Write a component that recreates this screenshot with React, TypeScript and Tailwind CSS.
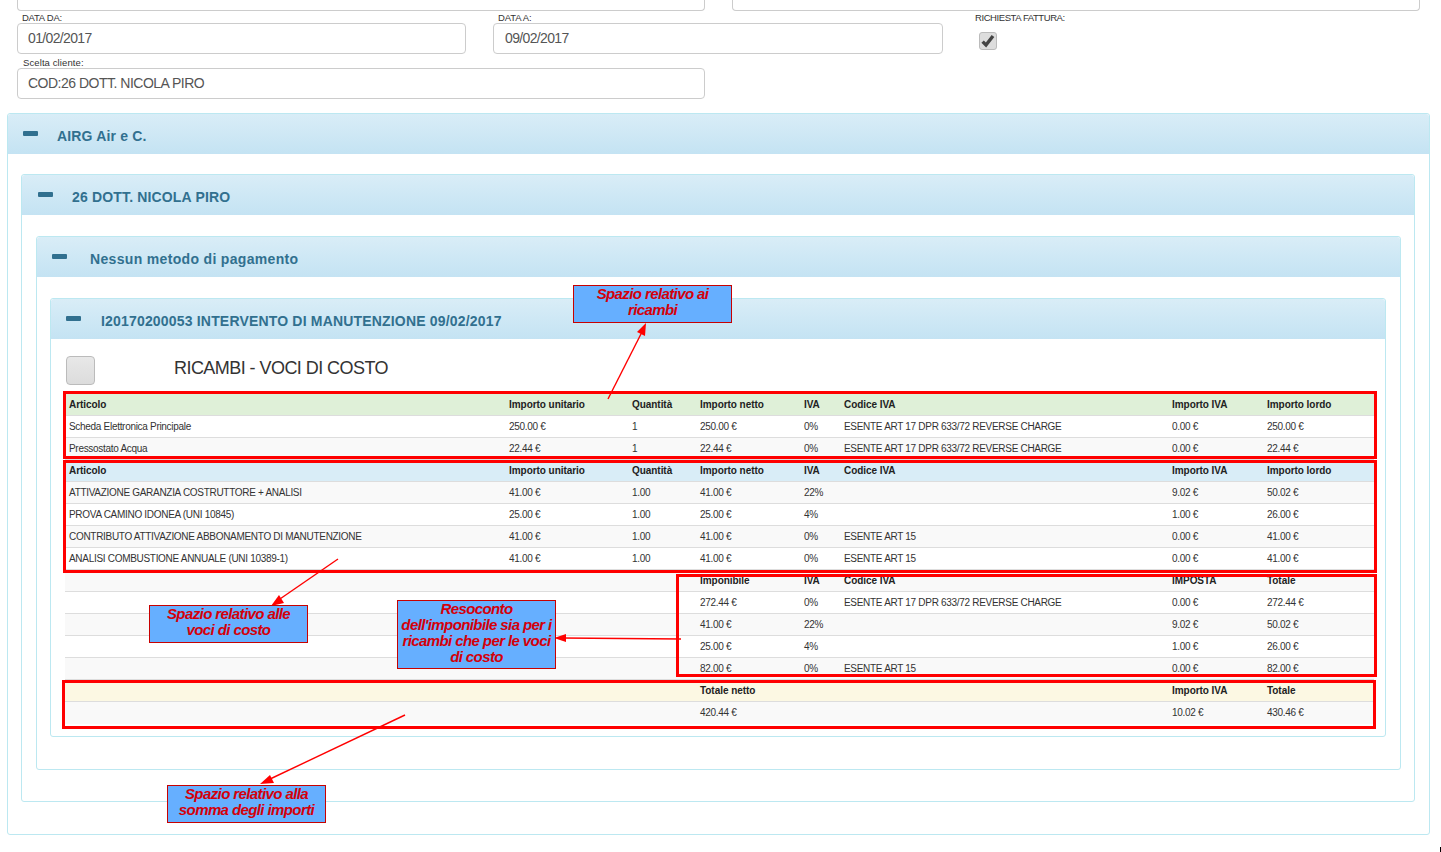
import React from "react";

const F = "[font-family:'Liberation_Sans',Arial,sans-serif]";

function Panel({ title, iconCls, titleCls, bodyCls, children }: { title: string; iconCls: string; titleCls: string; bodyCls: string; children: React.ReactNode }) {
  return (
    <div className="rounded-[3px] border border-[#bce8f1] bg-white">
      <div className="flex h-[40px] items-center rounded-t-[3px] bg-gradient-to-b from-[#d9edf7] to-[#c4e3f3]">
        <span className={`mb-[2px] h-[5px] w-[15px] rounded-[1px] bg-[#31708f] ${iconCls}`} />
        <span className={`pt-[4px] text-[14px] font-bold text-[#31708f] ${titleCls}`}>{title}</span>
      </div>
      <div className={bodyCls}>{children}</div>
    </div>
  );
}

const grid = "grid grid-cols-[440px_123px_68px_104px_40px_328px_95px_111px]";

function Row({ cells, head, bg, last }: { cells: string[]; head?: boolean; bg: string; last?: boolean }) {
  return (
    <div className={`${grid} h-[22px] items-center text-[10px] ${last ? "pb-[1px]" : "border-b border-[#ddd]"} ${bg} ${head ? "font-bold tracking-[-0.05px] text-[#222]" : "tracking-[-0.3px] text-[#333]"}`}>
      {cells.map((c, i) => (
        <div key={i} className="overflow-hidden whitespace-nowrap pl-[4px]">{c}</div>
      ))}
    </div>
  );
}

function Note({ cls, lines }: { cls: string; lines: string[] }) {
  return (
    <div className={`absolute flex w-[159px] flex-col items-center justify-center border border-[#c80000] bg-[#66afff] pb-[4px] text-[15px] font-bold italic leading-[16px] tracking-[-0.6px] text-[#d4000a] ${cls}`}>
      {lines.map((l) => (
        <div key={l} className="whitespace-nowrap">{l}</div>
      ))}
    </div>
  );
}

const ART = "ESENTE ART 17 DPR 633/72 REVERSE CHARGE";
const head = ["Articolo", "Importo unitario", "Quantità", "Importo netto", "IVA", "Codice IVA", "Importo IVA", "Importo lordo"];

export default function App() {
  return (
    <div className={`relative h-[852px] w-[1441px] overflow-hidden bg-white ${F}`}>
      <div className="flex h-[11px] gap-[27px] pl-[17px]">
        <div className="w-[688px] rounded-b-[4px] border border-t-0 border-[#ccc]" />
        <div className="w-[688px] rounded-b-[4px] border border-t-0 border-[#ccc]" />
      </div>

      <div className="flex pl-[17px] pt-[2px]">
        <div className="w-[449px]">
          <div className="h-[10px] pl-[5px] text-[9.5px] leading-[10px] tracking-[-0.25px] text-[#333]">DATA DA:</div>
          <div className="flex h-[31px] items-center rounded-[4px] border border-[#ccc] pl-[10px] text-[14px] tracking-[-0.65px] text-[#555]">01/02/2017</div>
        </div>
        <div className="ml-[27px] w-[450px]">
          <div className="h-[10px] pl-[5px] text-[9.5px] leading-[10px] tracking-[-0.15px] text-[#333]">DATA A:</div>
          <div className="flex h-[31px] items-center rounded-[4px] border border-[#ccc] pl-[11px] text-[14px] tracking-[-0.65px] text-[#555]">09/02/2017</div>
        </div>
        <div className="ml-[32px]">
          <div className="h-[10px] text-[9.5px] leading-[10px] tracking-[-0.42px] text-[#333]">RICHIESTA FATTURA:</div>
          <div className="ml-[4px] mt-[9px] flex h-[18px] w-[18px] items-center justify-center rounded-[3px] border border-[#bbb] bg-[#ddd]">
            <svg width="14" height="14" viewBox="0 0 14 14" fill="none">
              <path d="M1.6 7.6 L5 11 L12 2" stroke="#444" strokeWidth="3.4" />
            </svg>
          </div>
        </div>
      </div>

      <div className="pl-[17px] pt-[4px]">
        <div className="h-[10px] pl-[6px] text-[9.5px] leading-[10px] tracking-[0.1px] text-[#333]">Scelta cliente:</div>
        <div className="flex h-[31px] w-[688px] items-center rounded-[4px] border border-[#ccc] pl-[10px] text-[14px] tracking-[-0.5px] text-[#555]">COD:26 DOTT. NICOLA PIRO</div>
      </div>

      <div className="ml-[7px] mt-[14px] w-[1423px]">
        <Panel title="AIRG Air e C." iconCls="ml-[15px]" titleCls="ml-[19px] tracking-[0.16px]" bodyCls="pl-[13px] pr-[14px] pt-[20px] pb-[32px]">
          <Panel title="26 DOTT. NICOLA PIRO" iconCls="ml-[16px]" titleCls="ml-[19px] tracking-[0.16px]" bodyCls="pl-[14px] pr-[13px] pt-[21px] pb-[31px]">
            <Panel title="Nessun metodo di pagamento" iconCls="ml-[15px]" titleCls="ml-[23px] tracking-[0.33px]" bodyCls="pl-[13px] pr-[14px] pt-[21px] pb-[32px]">
              <Panel title="I20170200053 INTERVENTO DI MANUTENZIONE 09/02/2017" iconCls="ml-[15px]" titleCls="ml-[20px] tracking-[0.18px]" bodyCls="pl-[14px] pr-[11px] pt-[17px] pb-[12px]">
                <div className="flex h-[38px] items-start pl-[1px]">
                  <div className="h-[29px] w-[29px] rounded-[4px] border border-[#bbb] bg-gradient-to-b from-[#e8e8e8] to-[#dcdcdc]" />
                  <div className="ml-[79px] mt-[2px] text-[18px] leading-[20px] tracking-[-0.55px] text-[#333]">RICAMBI - VOCI DI COSTO</div>
                </div>
                <Row head bg="bg-[#dff0d8]" cells={head} />
                <Row bg="bg-white" cells={["Scheda Elettronica Principale", "250.00 €", "1", "250.00 €", "0%", ART, "0.00 €", "250.00 €"]} />
                <Row bg="bg-[#f9f9f9]" cells={["Pressostato Acqua", "22.44 €", "1", "22.44 €", "0%", ART, "0.00 €", "22.44 €"]} />
                <Row head bg="bg-[#d9edf7]" cells={head} />
                <Row bg="bg-[#f9f9f9]" cells={["ATTIVAZIONE GARANZIA COSTRUTTORE + ANALISI", "41.00 €", "1.00", "41.00 €", "22%", "", "9.02 €", "50.02 €"]} />
                <Row bg="bg-white" cells={["PROVA CAMINO IDONEA (UNI 10845)", "25.00 €", "1.00", "25.00 €", "4%", "", "1.00 €", "26.00 €"]} />
                <Row bg="bg-[#f9f9f9]" cells={["CONTRIBUTO ATTIVAZIONE ABBONAMENTO DI MANUTENZIONE", "41.00 €", "1.00", "41.00 €", "0%", "ESENTE ART 15", "0.00 €", "41.00 €"]} />
                <Row bg="bg-white" cells={["ANALISI COMBUSTIONE ANNUALE (UNI 10389-1)", "41.00 €", "1.00", "41.00 €", "0%", "ESENTE ART 15", "0.00 €", "41.00 €"]} />
                <Row head bg="bg-[#f9f9f9]" cells={["", "", "", "Imponibile", "IVA", "Codice IVA", "IMPOSTA", "Totale"]} />
                <Row bg="bg-white" cells={["", "", "", "272.44 €", "0%", ART, "0.00 €", "272.44 €"]} />
                <Row bg="bg-[#f9f9f9]" cells={["", "", "", "41.00 €", "22%", "", "9.02 €", "50.02 €"]} />
                <Row bg="bg-white" cells={["", "", "", "25.00 €", "4%", "", "1.00 €", "26.00 €"]} />
                <Row bg="bg-[#f9f9f9]" cells={["", "", "", "82.00 €", "0%", "ESENTE ART 15", "0.00 €", "82.00 €"]} />
                <Row head bg="bg-[#fcf8e3]" cells={["", "", "", "Totale netto", "", "", "Importo IVA", "Totale"]} />
                <Row last bg="bg-[#f9f9f9]" cells={["", "", "", "420.44 €", "", "", "10.02 €", "430.46 €"]} />
              </Panel>
            </Panel>
          </Panel>
        </Panel>
      </div>

      <div className="absolute left-[63px] top-[391px] h-[68px] w-[1314px] border-[3px] border-[#ff0000]" />
      <div className="absolute left-[63px] top-[460px] h-[113px] w-[1314px] border-[3px] border-[#ff0000]" />
      <div className="absolute left-[676px] top-[574px] h-[103px] w-[701px] border-[3px] border-[#ff0000]" />
      <div className="absolute left-[62px] top-[680px] h-[49px] w-[1314px] border-[3px] border-[#ff0000]" />

      <svg className="pointer-events-none absolute left-0 top-0" width="1441" height="852" viewBox="0 0 1441 852">
        <g stroke="#ff0000" strokeWidth="1.4" fill="none">
          <line x1="608" y1="399" x2="643" y2="330" />
          <line x1="338" y1="559" x2="277" y2="601" />
          <line x1="681" y1="639" x2="562" y2="638" />
          <line x1="405" y1="715" x2="268" y2="780" />
        </g>
        <g fill="#ff0000">
          <polygon points="646,323 645,336 637,332" />
          <polygon points="271,606 279,595 284,603" />
          <polygon points="554,638 566,634 566,642" />
          <polygon points="260,784 270,775 274,783" />
        </g>
      </svg>

      <Note cls="left-[573px] top-[285px] h-[38px]" lines={["Spazio relativo ai", "ricambi"]} />
      <Note cls="left-[149px] top-[605px] h-[38px]" lines={["Spazio relativo alle", "voci di costo"]} />
      <Note cls="left-[397px] top-[600px] h-[69px]" lines={["Resoconto", "dell'imponibile sia per i", "ricambi che per le voci", "di costo"]} />
      <Note cls="left-[167px] top-[785px] h-[38px]" lines={["Spazio relativo alla", "somma degli importi"]} />

      <div className="absolute left-[1440px] top-[847px] h-[5px] w-[1px] bg-black" />
    </div>
  );
}
